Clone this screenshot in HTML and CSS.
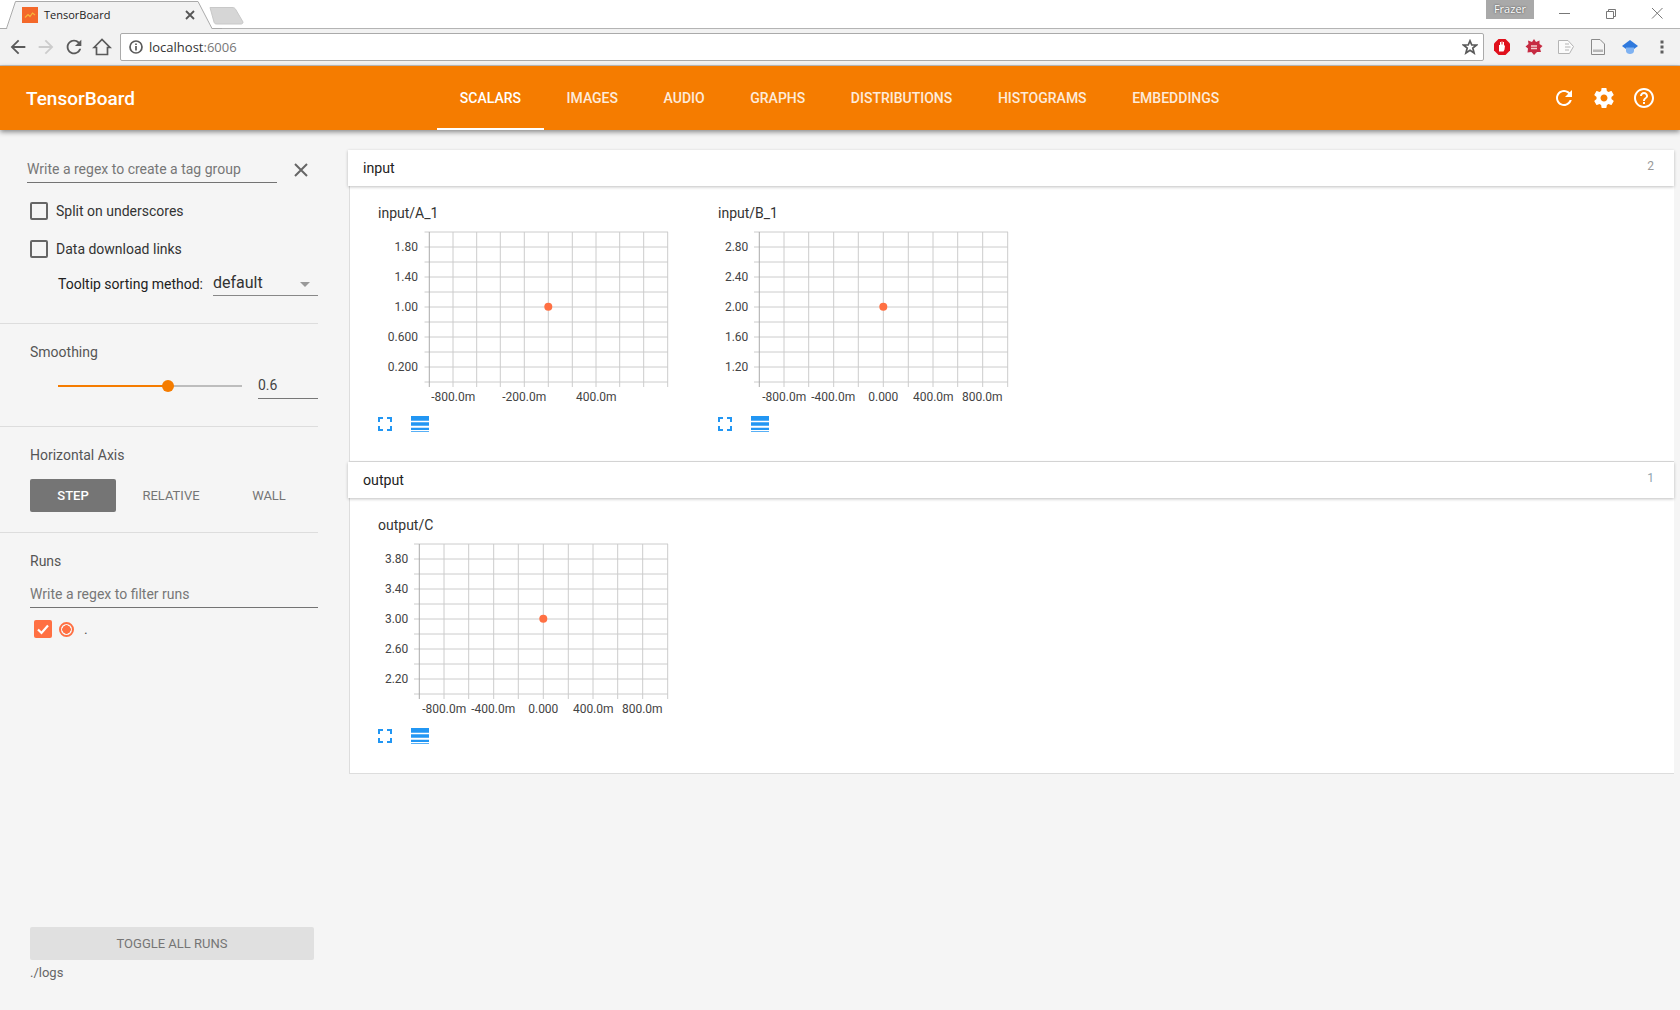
FILE: index.html
```html
<!DOCTYPE html>
<html lang="en">
<head>
    <meta charset="UTF-8">
    <meta name="viewport" content="width=device-width, initial-scale=1.0">
    <title>TensorBoard</title>
    <link rel="stylesheet" href="styles.css">
</head>
<body>
<!-- shared drawings -->
<svg class="defs" width="0" height="0">
    <symbol id="i-refresh" viewBox="0 0 24 24"><path d="M17.65 6.35C16.2 4.9 14.21 4 12 4c-4.42 0-7.99 3.58-7.99 8s3.57 8 7.99 8c3.73 0 6.84-2.55 7.73-6h-2.08c-.82 2.33-3.04 4-5.65 4-3.31 0-6-2.69-6-6s2.69-6 6-6c1.66 0 3.14.69 4.22 1.78L13 11h7V4l-2.35 2.35z"/></symbol>
    <symbol id="i-settings" viewBox="0 0 24 24"><path d="M19.43 12.98c.04-.32.07-.64.07-.98s-.03-.66-.07-.98l2.11-1.65c.19-.15.24-.42.12-.64l-2-3.46c-.12-.22-.39-.3-.61-.22l-2.49 1c-.52-.4-1.08-.73-1.69-.98l-.38-2.65C14.46 2.18 14.25 2 14 2h-4c-.25 0-.46.18-.49.42l-.38 2.65c-.61.25-1.17.59-1.69.98l-2.49-1c-.23-.09-.49 0-.61.22l-2 3.46c-.13.22-.07.49.12.64l2.11 1.65c-.04.32-.07.65-.07.98s.03.66.07.98l-2.11 1.65c-.19.15-.24.42-.12.64l2 3.46c.12.22.39.3.61.22l2.49-1c.52.4 1.08.73 1.69.98l.38 2.65c.03.24.24.42.49.42h4c.25 0 .46-.18.49-.42l.38-2.65c.61-.25 1.17-.59 1.69-.98l2.49 1c.23.09.49 0 .61-.22l2-3.46c.12-.22.07-.49-.12-.64l-2.11-1.65zM12 15.5c-1.93 0-3.5-1.57-3.5-3.5s1.57-3.5 3.5-3.5 3.5 1.57 3.5 3.5-1.57 3.5-3.5 3.5z"/></symbol>
    <symbol id="i-help" viewBox="0 0 24 24"><path d="M11 18h2v-2h-2v2zm1-16C6.48 2 2 6.48 2 12s4.48 10 10 10 10-4.48 10-10S17.52 2 12 2zm0 18c-4.41 0-8-3.59-8-8s3.59-8 8-8 8 3.59 8 8-3.59 8-8 8zm0-14c-2.21 0-4 1.79-4 4h2c0-1.1.9-2 2-2s2 .9 2 2c0 2-3 1.75-3 5h2c0-2.25 3-2.5 3-5 0-2.21-1.79-4-4-4z"/></symbol>
    <symbol id="i-arrow" viewBox="0 0 24 24"><path d="M20 11H7.83l5.59-5.59L12 4l-8 8 8 8 1.41-1.41L7.83 13H20v-2z"/></symbol>
    <symbol id="i-expand" viewBox="0 0 14 14"><path d="M0 0h5v2H2v3H0zM9 0h5v5h-2V2H9zM0 9h2v3h3v2H0zM12 9h2v5H9v-2h3z"/></symbol>
    <symbol id="i-table" viewBox="0 0 18 16"><path d="M0 0h18v4.7H0zM0 6.3h18v3.4H0zM0 11.7h18V14H0zM0 15.3h18V16H0z"/></symbol>
    <symbol id="grid-a" viewBox="0 0 291 160">
        <path class="grid" d="M46.5 4H290M46.5 19H290M46.5 34H290M46.5 49H290M46.5 64H290M46.5 79H290M46.5 94H290M46.5 109H290M46.5 124H290M46.5 139H290M46.5 154H290"/>
        <path class="grid" d="M75 4V159M98.7 4V159M122.3 4V159M146.3 4V159M170.3 4V159M194.3 4V159M218 4V159M241.7 4V159M265.7 4V159M289.7 4V159"/>
        <path class="axis" d="M51.3 4V159"/>
    </symbol>
    <symbol id="grid-b" viewBox="0 0 291 160">
        <path class="grid" d="M36 4H290M36 19H290M36 34H290M36 49H290M36 64H290M36 79H290M36 94H290M36 109H290M36 124H290M36 139H290M36 154H290"/>
        <path class="grid" d="M66 4V159M90.7 4V159M115.7 4V159M140.3 4V159M165.3 4V159M190.3 4V159M215 4V159M239.7 4V159M264.7 4V159M289.7 4V159"/>
        <path class="axis" d="M41.3 4V159"/>
    </symbol>
</svg>

<!-- browser window -->
<div class="tabstrip">
    <svg class="tab-shape" width="244" height="30" viewBox="0 0 244 30">
        <path class="tab-fill" d="M0 29H7L15.500 1.500H198L212 29H222V30H0Z"/>
        <path class="tab-line" d="M0 28.500H6.500L15.500 1.500H198L212 28.500H222"/>
        <path class="newtab" d="M210 7.500H232C234 7.500 235 8 236 10L243 22C243 23 242.500 24 241 24H217C215 24 214.500 23.500 214 22Z"/>
    </svg>
    <div class="tab-head">
        <svg class="favicon" width="16" height="16" viewBox="0 0 16 16">
            <rect width="16" height="16" fill="#f4682a"/>
            <path d="M3 10.500L6 7.500L8 9.500L10.500 6L13 8" fill="none" stroke="#f6b73c" stroke-width="1.200"/>
        </svg>
        <span class="tab-title">TensorBoard</span>
        <svg class="tab-close" width="10" height="10" viewBox="0 0 10 10"><path d="M1 1L9 9M9 1L1 9"/></svg>
    </div>
    <div class="window-btns">
        <div class="profile">Frazer</div>
        <svg class="win-icon" width="46" height="20" viewBox="0 0 46 20"><path d="M17 13.500H28"/></svg>
        <svg class="win-icon" width="46" height="20" viewBox="0 0 46 20"><path d="M18.500 11.500H25.500V18.500H18.500ZM20.500 11V9.500H27.500V16.500H26"/></svg>
        <svg class="win-icon" width="46" height="20" viewBox="0 0 46 20"><path d="M18 8L28.500 18.500M28.500 8L18 18.500"/></svg>
    </div>
</div>
<div class="toolbar">
    <button class="nav-btn"><svg width="22" height="22"><use href="#i-arrow"/></svg></button>
    <button class="nav-btn off"><svg class="flip" width="22" height="22"><use href="#i-arrow"/></svg></button>
    <button class="nav-btn"><svg width="22" height="22"><use href="#i-refresh"/></svg></button>
    <button class="nav-btn">
        <svg width="20" height="20" viewBox="0 0 20 20"><path class="outline" d="M2 10.500L10 2.500L18 10.500H15.500V17.500H4.500V10.500Z"/></svg>
    </button>
    <div class="omnibox">
        <svg width="14" height="14" viewBox="0 0 14 14"><circle class="outline" cx="7" cy="7" r="6"/><path class="outline" d="M7 6V10.500M7 3.500V5"/></svg>
        <span class="url">localhost<span class="port">:6006</span></span>
        <svg class="star" width="16" height="16" viewBox="0 0 16 16"><path class="outline" d="M8 1.800L9.800 6H14.500L10.800 9L12.100 14L8 11.200L3.900 14L5.200 9L1.500 6H6.200Z"/></svg>
    </div>
    <div class="extensions">
        <div class="ext">
            <svg width="18" height="18" viewBox="0 0 18 18"><path d="M5.500 1H12.500L17 5.500V12.500L12.500 17H5.500L1 12.500V5.500Z" fill="#e0101c"/><path d="M6 13.500V7H7V4H8V6.500H8.500V3.500H9.500V6.500H10V4H11V7.500L12 7.500L11.500 11.500L10.500 13.500Z" fill="#fff"/></svg>
        </div>
        <div class="ext">
            <svg width="18" height="18" viewBox="0 0 18 18"><path d="M9 1L11 4L14.500 2.500L14.500 6L17.500 8L15 10.500L16 14L12 14L9 17L6.500 14L2.500 14.500L3 10.500L.5 8.500L3.500 6L3 2.500L7 4Z" fill="#c62b42"/><path d="M6 8H12M6 10.500H12" stroke="#f3d0d0" stroke-width="1.300"/></svg>
        </div>
        <div class="ext">
            <svg width="18" height="18" viewBox="0 0 18 18"><path d="M1.500 2.500H11L16.500 8.500L12.500 15.500H1.500Z" fill="#fbfbfb" stroke="#b4b4b4"/><path d="M8 6H12M8 9H13.500M8 12H12" stroke="#b4b4b4"/></svg>
        </div>
        <div class="ext">
            <svg width="16" height="18" viewBox="0 0 16 18"><path d="M1.500 1.500H10L14.500 6V16.500H1.500Z" fill="#f4f4f4" stroke="#8a8a8a"/><rect x="3" y="11.500" width="10" height="2.500" fill="#b8b8b8"/></svg>
        </div>
        <div class="ext">
            <svg width="18" height="18" viewBox="0 0 18 18"><path d="M1 8L9 2L17 8L13 11H5Z" fill="#2f79dd"/><path d="M5 9.500H13V13C13 15 11 16 9 16C7 16 5 15 5 13Z" fill="#7fb2f2"/></svg>
        </div>
        <div class="ext">
            <svg width="4" height="14" viewBox="0 0 4 14"><path d="M.5.500h3v3h-3zM.5 5.500h3v3h-3zM.5 10.500h3v3h-3z" fill="#5f5f5f"/></svg>
        </div>
    </div>
</div>

<!-- tensorboard -->
<header class="topbar">
    <div class="brand">TensorBoard</div>
    <nav class="tabs">
        <a class="active">Scalars</a>
        <a>Images</a>
        <a>Audio</a>
        <a>Graphs</a>
        <a>Distributions</a>
        <a>Histograms</a>
        <a>Embeddings</a>
    </nav>
    <div class="top-icons">
        <svg width="24" height="24"><use href="#i-refresh"/></svg>
        <svg width="24" height="24"><use href="#i-settings"/></svg>
        <svg width="24" height="24"><use href="#i-help"/></svg>
    </div>
</header>

<div class="page">
    <aside class="sidebar">
        <section class="side-section first">
            <div class="regex-row">
                <div class="field regex">Write a regex to create a tag group</div>
                <svg class="clear" width="14" height="14" viewBox="0 0 14 14"><path d="M1 1L13 13M13 1L1 13"/></svg>
            </div>
            <label class="option"><span class="box"></span>Split on underscores</label>
            <label class="option"><span class="box"></span>Data download links</label>
            <div class="tooltip-row">
                <span>Tooltip sorting method:</span>
                <div class="select">default<i class="caret"></i></div>
            </div>
        </section>
        <section class="side-section smoothing">
            <div class="side-title">Smoothing</div>
            <div class="slider-row">
                <div class="slider"><div class="slider-fill"></div><div class="slider-knob"></div></div>
                <div class="slider-value">0.6</div>
            </div>
        </section>
        <section class="side-section">
            <div class="side-title">Horizontal Axis</div>
            <div class="axis-btns">
                <div class="axis-btn on">Step</div>
                <div class="axis-btn rel">Relative</div>
                <div class="axis-btn wall">Wall</div>
            </div>
        </section>
        <section class="side-section runs">
            <div class="side-title">Runs</div>
            <div class="field filter">Write a regex to filter runs</div>
            <div class="run">
                <span class="run-check"><svg width="18" height="18" viewBox="0 0 18 18"><path d="M4 9.500L7.500 13L14 5.500" fill="none" stroke="#fff" stroke-width="2.200"/></svg></span>
                <span class="run-radio"></span>
                <span class="run-name">.</span>
            </div>
        </section>
        <div class="toggle">Toggle all runs</div>
        <div class="logdir">./logs</div>
    </aside>

    <main class="content">
        <div class="group">
            <div class="group-head"><span>input</span><span class="count">2</span></div>
            <div class="group-body">
                <div class="chart">
                    <div class="chart-title">input/A_1</div>
                    <svg class="plot" width="291" height="184" viewBox="0 0 291 184">
                        <use href="#grid-a" width="291" height="160"/>
                        <g class="ylabels">
                            <text x="40" y="23">1.80</text>
                            <text x="40" y="53">1.40</text>
                            <text x="40" y="83">1.00</text>
                            <text x="40" y="113">0.600</text>
                            <text x="40" y="143">0.200</text>
                        </g>
                        <g class="xlabels">
                            <text x="75.300" y="173">-800.0m</text>
                            <text x="146.300" y="173">-200.0m</text>
                            <text x="218.300" y="173">400.0m</text>
                        </g>
                        <circle class="dot" cx="170.300" cy="78.700" r="4"/>
                    </svg>
                    <div class="chart-btns">
                        <svg width="14" height="14"><use href="#i-expand"/></svg>
                        <svg width="18" height="16"><use href="#i-table"/></svg>
                    </div>
                </div>
                <div class="chart">
                    <div class="chart-title">input/B_1</div>
                    <svg class="plot" width="291" height="184" viewBox="0 0 291 184">
                        <use href="#grid-b" width="291" height="160"/>
                        <g class="ylabels">
                            <text x="30.300" y="23">2.80</text>
                            <text x="30.300" y="53">2.40</text>
                            <text x="30.300" y="83">2.00</text>
                            <text x="30.300" y="113">1.60</text>
                            <text x="30.300" y="143">1.20</text>
                        </g>
                        <g class="xlabels">
                            <text x="66.300" y="173">-800.0m</text>
                            <text x="115.300" y="173">-400.0m</text>
                            <text x="165.300" y="173">0.000</text>
                            <text x="215.300" y="173">400.0m</text>
                            <text x="264.300" y="173">800.0m</text>
                        </g>
                        <circle class="dot" cx="165.300" cy="78.700" r="4"/>
                    </svg>
                    <div class="chart-btns">
                        <svg width="14" height="14"><use href="#i-expand"/></svg>
                        <svg width="18" height="16"><use href="#i-table"/></svg>
                    </div>
                </div>
            </div>
        </div>
        <div class="group">
            <div class="group-head"><span>output</span><span class="count blue">1</span></div>
            <div class="group-body">
                <div class="chart">
                    <div class="chart-title">output/C</div>
                    <svg class="plot" width="291" height="184" viewBox="0 0 291 184">
                        <use href="#grid-b" width="291" height="160"/>
                        <g class="ylabels">
                            <text x="30.300" y="23">3.80</text>
                            <text x="30.300" y="53">3.40</text>
                            <text x="30.300" y="83">3.00</text>
                            <text x="30.300" y="113">2.60</text>
                            <text x="30.300" y="143">2.20</text>
                        </g>
                        <g class="xlabels">
                            <text x="66.300" y="173">-800.0m</text>
                            <text x="115.300" y="173">-400.0m</text>
                            <text x="165.300" y="173">0.000</text>
                            <text x="215.300" y="173">400.0m</text>
                            <text x="264.300" y="173">800.0m</text>
                        </g>
                        <circle class="dot" cx="165.300" cy="78.700" r="4"/>
                    </svg>
                    <div class="chart-btns">
                        <svg width="14" height="14"><use href="#i-expand"/></svg>
                        <svg width="18" height="16"><use href="#i-table"/></svg>
                    </div>
                </div>
            </div>
        </div>
    </main>
</div>
</body>
</html>
```

FILE: styles.css
```css
* {
    box-sizing: border-box;
}

body {
    margin: 0;
    height: 1010px;
    overflow: hidden;
    background-color: #f5f5f5;
    font-family: Roboto, sans-serif;
    font-size: 14px;
    color: #333;
}

.defs {
    position: absolute;
}

/* Browser window */
.tabstrip {
    position: relative;
    display: flex;
    height: 29px;
    background-color: #fff;
    border-bottom: 1px solid #b4b4b4;
}

.tab-shape {
    position: absolute;
    left: 0;
    top: 0;
    overflow: visible;
}

.tab-fill {
    fill: #f2f2f2;
}

.tab-line {
    fill: none;
    stroke: #aaa;
}

.newtab {
    fill: #d6d6d6;
    stroke: #c8c8c8;
}

.tab-head {
    position: relative;
    display: flex;
    align-items: center;
    width: 173px;
    height: 28px;
    margin-left: 22px;
    padding-top: 1px;
}

.tab-title {
    margin-left: 6px;
    font-family: "Open Sans", sans-serif;
    font-size: 11px;
    color: #222;
}

.tab-close {
    margin-left: auto;
    stroke: #555;
    stroke-width: 1.800;
}

.window-btns {
    display: flex;
    align-items: flex-start;
    margin-left: auto;
}

.profile {
    width: 48px;
    height: 19px;
    margin-right: 8px;
    background-color: #a9a9a9;
    color: #fff;
    font-family: "Open Sans", sans-serif;
    font-size: 11px;
    line-height: 17px;
    text-align: center;
    text-shadow: 0 0 2px #333;
}

.win-icon {
    fill: none;
    stroke: #777;
}

.toolbar {
    display: flex;
    align-items: center;
    height: 37px;
    padding-left: 4px;
    background-color: #f2f2f2;
    border-bottom: 1px solid #c4c4c4;
}

.nav-btn {
    display: flex;
    align-items: center;
    justify-content: center;
    width: 28px;
    height: 28px;
    padding: 0;
    border: none;
    background: none;
    fill: #5a5a5a;
}

.nav-btn.off {
    fill: #ccc;
}

.flip {
    transform: scaleX(-1);
}

.outline {
    fill: none;
    stroke: #5a5a5a;
    stroke-width: 1.700;
}

.omnibox {
    display: flex;
    align-items: center;
    flex: 1;
    height: 28px;
    margin-left: 4px;
    padding: 0 5px 0 8px;
    background-color: #fff;
    border: 1px solid #aaa;
    border-radius: 2px;
}

.url {
    margin-left: 6px;
    font-family: "Open Sans", sans-serif;
    font-size: 13px;
    color: #333;
}

.port {
    color: #777;
}

.star {
    margin-left: auto;
}

.extensions {
    display: flex;
    margin-left: 2px;
    margin-right: 2px;
}

.ext {
    display: flex;
    align-items: center;
    justify-content: center;
    width: 32px;
    height: 28px;
}

/* Top bar */
.topbar {
    position: relative;
    z-index: 2;
    display: flex;
    align-items: center;
    height: 64px;
    padding: 0 24px 0 26px;
    background-color: #f57c00;
    color: #fff;
    box-shadow: 0 2px 5px rgba(0, 0, 0, 0.45);
}

.brand {
    width: 411px;
    font-size: 19px;
    font-weight: 500;
}

.tabs {
    display: flex;
    align-self: stretch;
}

.tabs a {
    display: flex;
    align-items: center;
    padding: 2px 22.800px 0;
    font-size: 14px;
    font-weight: 500;
    text-transform: uppercase;
    border-bottom: 2px solid transparent;
    color: #fff;
    opacity: 0.85;
}

.tabs a.active {
    border-bottom-color: #fff;
    opacity: 1;
}

.top-icons {
    display: flex;
    gap: 16px;
    margin-left: auto;
    fill: #fff;
}

/* Page */
.page {
    display: flex;
    height: 880px;
}

.sidebar {
    display: flex;
    flex-direction: column;
    flex: none;
    width: 318px;
    margin-right: 30px;
    padding-bottom: 29px;
}

.side-section {
    padding: 20px 0 20px 30px;
    border-bottom: 1px solid #ddd;
}

.side-section.first {
    padding: 26px 0 27px 0;
    height: 194px;
}

.side-section.smoothing {
    padding-bottom: 27px;
}

.side-section.runs {
    border-bottom: none;
    padding-bottom: 0;
}

.side-title {
    height: 16px;
    line-height: 16px;
    color: #555;
}

.field {
    color: #777;
    border-bottom: 1px solid #737373;
}

.regex-row {
    display: flex;
    align-items: center;
    padding-left: 27px;
}

.regex {
    width: 250px;
    height: 27px;
    line-height: 26px;
}

.clear {
    margin-left: 17px;
    fill: none;
    stroke: #666;
    stroke-width: 2;
}

.option {
    display: flex;
    align-items: center;
    height: 18px;
    margin: 19px 0 20px 30px;
    color: #333;
}

.option + .option {
    margin-top: 0;
    margin-bottom: 0;
}

.box {
    width: 18px;
    height: 18px;
    margin-right: 8px;
    border: 2px solid #666;
    border-radius: 2px;
}

.tooltip-row {
    display: flex;
    align-items: flex-end;
    justify-content: space-between;
    margin: 12px 0 0 58px;
    height: 26px;
    color: #212121;
}

.tooltip-row span {
    line-height: 24px;
}

.select {
    position: relative;
    width: 105px;
    height: 26px;
    font-size: 16px;
    line-height: 25px;
    color: #333;
    border-bottom: 1px solid #888;
}

.caret {
    position: absolute;
    right: 8px;
    top: 12px;
    border-left: 5px solid transparent;
    border-right: 5px solid transparent;
    border-top: 5px solid #999;
}

.slider-row {
    display: flex;
    align-items: center;
    height: 27px;
    margin-top: 12px;
    padding-left: 28px;
}

.slider {
    position: relative;
    width: 184px;
    height: 2px;
    margin-top: 1px;
    background-color: #bdbdbd;
}

.slider-fill {
    width: 110px;
    height: 2px;
    background-color: #f57c00;
}

.slider-knob {
    position: absolute;
    left: 104px;
    top: -5px;
    width: 12px;
    height: 12px;
    border-radius: 50%;
    background-color: #f57c00;
}

.slider-value {
    width: 60px;
    height: 27px;
    margin-left: 16px;
    line-height: 26px;
    color: #444;
    border-bottom: 1px solid #777;
}

.axis-btns {
    display: flex;
    margin-top: 16px;
}

.axis-btn {
    height: 33px;
    font-size: 13px;
    line-height: 33px;
    text-align: center;
    text-transform: uppercase;
    color: #757575;
}

.axis-btn.on {
    width: 86px;
    background-color: #757575;
    color: #fff;
    font-weight: 500;
    border-radius: 2px;
}

.axis-btn.rel {
    width: 98px;
    margin-left: 6px;
}

.axis-btn.wall {
    width: 98px;
}

.filter {
    height: 27px;
    margin-top: 12px;
    line-height: 26px;
}

.run {
    display: flex;
    align-items: center;
    height: 18px;
    margin: 12px 0 0 4px;
}

.run-check {
    width: 18px;
    height: 18px;
    background-color: #ff7043;
    border-radius: 2px;
}

.run-radio {
    width: 15px;
    height: 15px;
    margin-left: 7px;
    border: 2px solid #ff7043;
    border-radius: 50%;
    background: radial-gradient(circle, #ff7043 0 4px, transparent 4.500px);
}

.run-name {
    margin-left: 10px;
    color: #555;
}

.toggle {
    width: 284px;
    height: 33px;
    margin: auto 0 0 30px;
    background-color: #e0e0e0;
    border-radius: 2px;
    font-size: 13px;
    line-height: 33px;
    text-align: center;
    text-transform: uppercase;
    color: #757575;
}

.logdir {
    height: 16px;
    margin: 5px 0 0 30px;
    font-size: 13px;
    line-height: 16px;
    color: #666;
}

/* Chart groups */
.content {
    flex: 1;
    padding: 20px 6px 0 0;
}

.group-head {
    position: relative;
    display: flex;
    align-items: center;
    justify-content: space-between;
    height: 36px;
    padding: 0 20px 0 15px;
    background-color: #fff;
    color: #222;
    font-size: 14.200px;
    box-shadow: 0 1px 3px rgba(0, 0, 0, 0.25);
}

.count {
    margin-top: -4px;
    font-size: 12px;
    color: #999;
}

.count.blue {
    color: #90a4ae;
}

.group-body {
    display: flex;
    gap: 49px;
    height: 276px;
    margin-left: 1px;
    padding: 19px 0 0 28px;
    background-color: #fff;
    border: solid #ddd;
    border-width: 0 0 1px 1px;
}

.chart {
    width: 291px;
}

.chart-title {
    height: 16px;
    margin-bottom: 7px;
    font-size: 14px;
    line-height: 16px;
    color: #333;
}

.plot {
    display: block;
}

.grid {
    fill: none;
    stroke: #ccc;
}

.axis {
    fill: none;
    stroke: #aaa;
}

.dot {
    fill: #ff7043;
}

.plot text {
    font-family: Roboto, sans-serif;
    font-size: 12px;
    fill: #444;
}

.ylabels {
    text-anchor: end;
}

.xlabels {
    text-anchor: middle;
}

.chart-btns {
    display: flex;
    align-items: center;
    gap: 19px;
    height: 16px;
    margin-top: 4px;
    fill: #2196f3;
}
```
